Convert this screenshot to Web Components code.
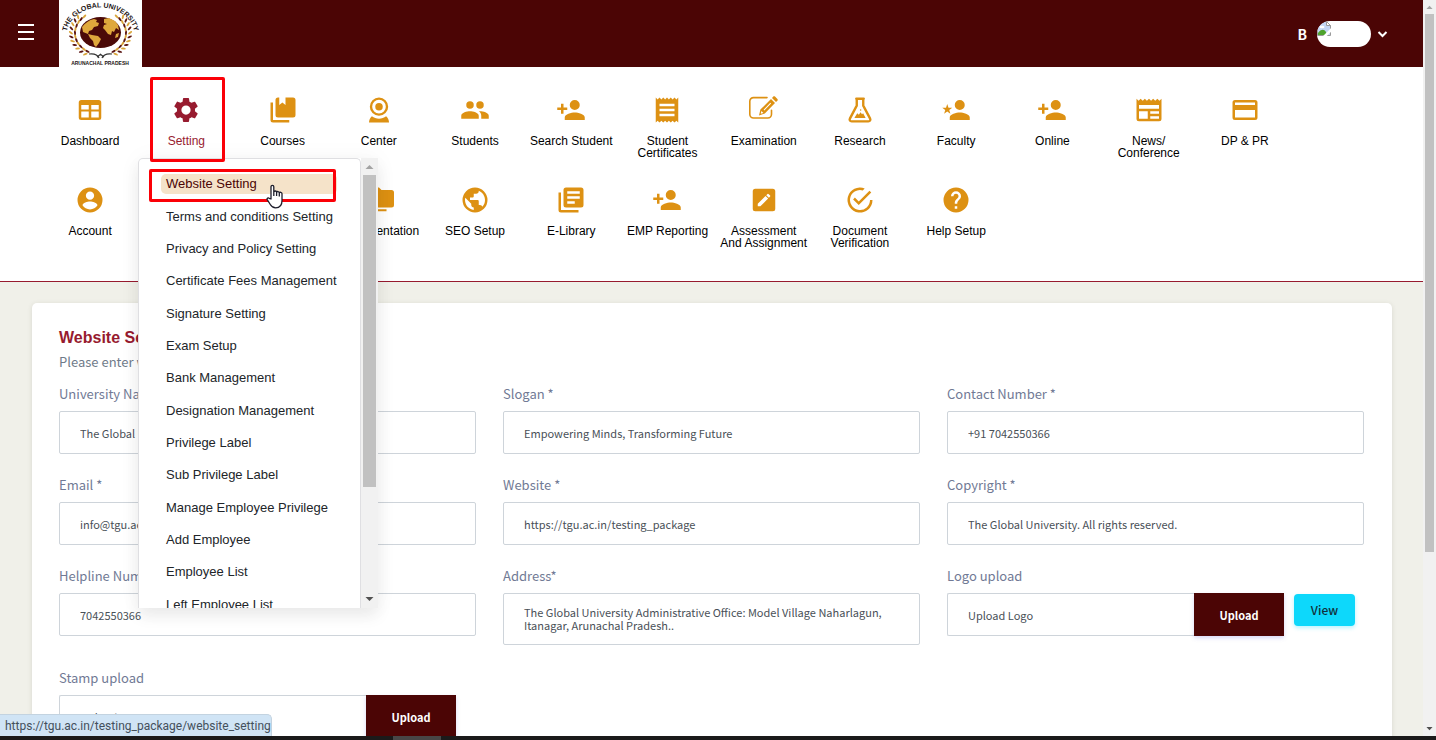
<!DOCTYPE html>
<html lang="en">
<head>
<meta charset="utf-8">
<title>Website Setting</title>
<style>
  html, body { margin: 0; height: 100%; overflow: hidden; background: #f0f0e9; }
  body { font-family: "Noto Sans CJK SC", "Open Sans", sans-serif; }
</style>
</head>
<body>
<app-shell>
  <top-bar slot="header"></top-bar>
  <main-nav slot="nav">
    <nav-item icon="dashboard">Dashboard</nav-item>
    <nav-item icon="gear" active>Setting</nav-item>
    <nav-item icon="courses">Courses</nav-item>
    <nav-item icon="webcam">Center</nav-item>
    <nav-item icon="group">Students</nav-item>
    <nav-item icon="personAdd">Search Student</nav-item>
    <nav-item icon="receipt">Student<br>Certificates</nav-item>
    <nav-item icon="exam">Examination</nav-item>
    <nav-item icon="flask">Research</nav-item>
    <nav-item icon="personStar">Faculty</nav-item>
    <nav-item icon="personAdd">Online</nav-item>
    <nav-item icon="news">News/<br>Conference</nav-item>
    <nav-item icon="card">DP &amp; PR</nav-item>
    <nav-item icon="account">Account</nav-item>
    <nav-item icon="folders" style="grid-column:4">Documentation</nav-item>
    <nav-item icon="globe">SEO Setup</nav-item>
    <nav-item icon="library">E-Library</nav-item>
    <nav-item icon="personAdd">EMP Reporting</nav-item>
    <nav-item icon="edit">Assessment<br>And Assignment</nav-item>
    <nav-item icon="check">Document<br>Verification</nav-item>
    <nav-item icon="help">Help Setup</nav-item>
    <setting-menu slot="menu"></setting-menu>
  </main-nav>
  <setting-card>
    <form-field value="The Global University">University Name *</form-field>
    <form-field value="Empowering Minds, Transforming Future">Slogan *</form-field>
    <form-field value="+91 7042550366">Contact Number *</form-field>
    <form-field value="info@tgu.ac.in">Email *</form-field>
    <form-field value="https://tgu.ac.in/testing_package">Website *</form-field>
    <form-field value="The Global University. All rights reserved.">Copyright *</form-field>
    <form-field value="7042550366">Helpline Number *</form-field>
    <form-field multiline value="The Global University Administrative Office: Model Village Naharlagun, Itanagar, Arunachal Pradesh..">Address*</form-field>
    <upload-field value="Upload Logo" view>Logo upload</upload-field>
    <upload-field value="Upload Stamp">Stamp upload</upload-field>
  </setting-card>
  <link-status slot="status">https://tgu.ac.in/testing_package/website_setting</link-status>
</app-shell>

<script>
const ICONS = {
  dashboard: '<path fill-rule="evenodd" d="M5 4h14a2 2 0 0 1 2 2v12a2 2 0 0 1-2 2H5a2 2 0 0 1-2-2V6a2 2 0 0 1 2-2zM5 8v3.500h6V8zM13 8v3.500h6V8zM5 13.200V18h6v-4.800zM13 13.200V18h6v-4.800z"/>',
  gear: '<path fill-rule="evenodd" d="M19.140 12.940c.04-.3.06-.61.06-.94 0-.32-.02-.64-.07-.94l2.030-1.580c.18-.14.23-.41.12-.61l-1.920-3.320c-.12-.22-.37-.29-.59-.22l-2.390.96c-.5-.38-1.030-.7-1.620-.94l-.36-2.540c-.04-.24-.24-.41-.48-.41h-3.840c-.24 0-.43.17-.47.41l-.36 2.540c-.59.24-1.130.57-1.620.94l-2.390-.96c-.22-.08-.47 0-.59.22L2.740 8.870c-.12.21-.08.47.12.61l2.030 1.580c-.05.3-.09.63-.09.94s.02.64.07.94l-2.030 1.580c-.18.14-.23.41-.12.61l1.920 3.320c.12.22.37.29.59.22l2.390-.96c.5.38 1.030.7 1.620.94l.36 2.540c.05.24.24.41.48.41h3.840c.24 0 .44-.17.47-.41l.36-2.540c.59-.24 1.130-.56 1.620-.94l2.390.96c.22.08.47 0 .59-.22l1.920-3.320c.12-.22.07-.47-.12-.61zM12 15.700a3.700 3.700 0 1 1 0-7.400 3.700 3.700 0 0 1 0 7.400z"/>',
  courses: '<path d="M4 6H2v14a2 2 0 0 0 2 2h13v-2H4z"/><path d="M8 2h1v6l2.500-2L14 8V2h6a2 2 0 0 1 2 2v12a2 2 0 0 1-2 2H8a2 2 0 0 1-2-2V4a2 2 0 0 1 2-2z"/>',
  webcam: '<circle cx="12" cy="9.300" r="6.400" fill="none" stroke="currentColor" stroke-width="1.900"/><circle cx="12" cy="9.300" r="3"/><path d="M4 22c0-2 .9-3.700 2.300-5 1.600 1.200 3.600 1.900 5.700 1.900s4.100-.7 5.700-1.900C19.100 18.300 20 20 20 22z"/>',
  group: '<path d="M16 11a3 3 0 1 0 0-6 3 3 0 0 0 0 6zM8 11a3 3 0 1 0 0-6 3 3 0 0 0 0 6zM8 13c-2.330 0-7 1.170-7 3.500V19h14v-2.500C15 14.170 10.330 13 8 13zM16 13c-.29 0-.62.02-.97.05 1.160.84 1.970 1.970 1.970 3.450V19h6v-2.500c0-2.330-4.670-3.500-7-3.500z"/>',
  personAdd: '<path d="M15 12a4 4 0 1 0 0-8 4 4 0 0 0 0 8zM6 10V7H4v3H1v2h3v3h2v-3h3v-2zM15 14c-2.670 0-8 1.340-8 4v2h16v-2c0-2.660-5.330-4-8-4z"/>',
  personStar: '<path d="M15 12a4 4 0 1 0 0-8 4 4 0 0 0 0 8zM15 14c-2.670 0-8 1.340-8 4v2h16v-2c0-2.660-5.330-4-8-4zM5 7.200l1 2.900 3 .1-2.400 1.800.9 3L5 13.200 2.500 15l.9-3L1 10.200l3-.1z"/>',
  receipt: '<path d="M18 17H6v-2h12zm0-4H6v-2h12zm0-4H6V7h12zM3 22l1.500-1.500L6 22l1.500-1.500L9 22l1.500-1.500L12 22l1.500-1.500L15 22l1.500-1.500L18 22l1.500-1.500L21 22V2l-1.500 1.500L18 2l-1.500 1.500L15 2l-1.500 1.500L12 2l-1.500 1.500L9 2 7.500 3.500 6 2 4.500 3.500 3 2z"/>',
  exam: '<path fill="none" stroke="currentColor" stroke-width="1.600" stroke-linecap="round" d="M18 1.600H4.500A3.700 3.700 0 0 0 .8 5.300v13A3.700 3.700 0 0 0 4.500 22h14.300a3.700 3.700 0 0 0 3.700-3.700v-4"/><path d="M10 19.500l1.400-6L22 3l4 4-10.200 10.500zM23 2l1.300-1.400c.5-.5 1.200-.5 1.700 0l2.400 2.400c.5.500.5 1.200 0 1.700L27 6z"/><path fill="#fff" d="M11.700 17.700l.7-2.700 2 1.900zM14.600 13.700l6.700-6.900.8.700-6.800 7z"/>',
  flask: '<path fill="none" stroke="currentColor" stroke-width="1.900" stroke-linejoin="round" stroke-linecap="round" d="M9 3h6M9.400 3v5.500L4 18.700C3.300 20 4 21.100 5.300 21.100h13.400c1.300 0 2-1.100 1.300-2.400L14.600 8.500V3"/><path d="M7.500 18.300l2.300-3.800 1.300 1.200 1.300-1.900 1.200 1.600.9-.9 2 3.800z"/><circle cx="12.500" cy="12" r=".6"/>',
  news: '<path fill-rule="evenodd" d="M22 3l-1.670 1.670L18.670 3 17 4.670 15.330 3l-1.660 1.670L12 3l-1.670 1.670L8.670 3 7 4.670 5.330 3 3.670 4.670 2 3v16a2 2 0 0 0 2 2h16a2 2 0 0 0 2-2zM11 19H4v-6h7zm9 0h-7v-2h7zm0-4h-7v-2h7zm0-4H4V8h16z"/>',
  card: '<path fill-rule="evenodd" d="M20 4H4a2 2 0 0 0-2 2v12a2 2 0 0 0 2 2h16a2 2 0 0 0 2-2V6a2 2 0 0 0-2-2zm0 14H4v-6h16zm0-10H4V6h16z"/>',
  account: '<path fill-rule="evenodd" d="M12 2a10 10 0 1 0 0 20 10 10 0 0 0 0-20zm0 3.200a3.300 3.300 0 1 1 0 6.600 3.300 3.300 0 0 1 0-6.600zM12 19.500c-2.500 0-4.710-1.280-6-3.220.03-1.990 4-3.080 6-3.080s5.970 1.090 6 3.080c-1.290 1.940-3.500 3.220-6 3.220z"/>',
  folders: '<path d="M3 6H1v13a2 2 0 0 0 2 2h15v-1.600H3zM22 4h-8l-2-2H7a2 2 0 0 0-2 2v12a2 2 0 0 0 2 2h15a2 2 0 0 0 2-2V6a2 2 0 0 0-2-2z"/>',
  globe: '<path fill-rule="evenodd" d="M12 2a10 10 0 1 0 0 20 10 10 0 0 0 0-20zm-1 17.930c-3.950-.49-7-3.850-7-7.930 0-.62.08-1.210.21-1.790L9 15v1c0 1.100.9 2 2 2zm6.900-2.540c-.26-.81-1-1.390-1.900-1.390h-1v-3c0-.55-.45-1-1-1H8v-2h2c.55 0 1-.45 1-1V7h2c1.100 0 2-.9 2-2v-.41c2.930 1.190 5 4.060 5 7.410 0 2.080-.8 3.970-2.100 5.390z"/>',
  library: '<path fill-rule="evenodd" d="M4 6H2v14a2 2 0 0 0 2 2h14v-2H4zM20 2H8a2 2 0 0 0-2 2v12a2 2 0 0 0 2 2h12a2 2 0 0 0 2-2V4a2 2 0 0 0-2-2zm-1 9H9V9h10zm-4 4H9v-2h6zm4-8H9V5h10z"/>',
  edit: '<path fill-rule="evenodd" d="M5 3h14a2 2 0 0 1 2 2v14a2 2 0 0 1-2 2H5a2 2 0 0 1-2-2V5a2 2 0 0 1 2-2zM7 17h2.100l6.200-6.200-2.100-2.100L7 14.900zM16.900 9.200c.2-.2.2-.6 0-.8l-1.300-1.300a.6.6 0 0 0-.8 0l-1 1 2.100 2.100z"/>',
  check: '<path d="M20 12a8 8 0 1 1-5.800-7.690l1.570-1.570A10 10 0 1 0 22 12zM7.910 10.080L6.500 11.500 11 16 21 6l-1.410-1.420L11 13.170z"/>',
  help: '<path fill-rule="evenodd" d="M12 2a10 10 0 1 0 0 20 10 10 0 0 0 0-20zm1 17h-2v-2h2zm2.070-7.750l-.9.920C13.450 12.900 13 13.500 13 15h-2v-.5c0-1.100.45-2.100 1.170-2.830l1.240-1.260c.37-.36.59-.86.59-1.410a2 2 0 0 0-4 0H8a4 4 0 0 1 8 0c0 .88-.36 1.680-.93 2.250z"/>'
};

class Base extends HTMLElement {
  connectedCallback() {
    if (this.shadowRoot) return;
    this.attachShadow({ mode: 'open' }).innerHTML =
      '<style>:host,*{box-sizing:border-box}' + this.styles() + '</style>' + this.markup();
  }
}

/* Window frame: page area, vertical scroll rail, dark edge at the bottom */
customElements.define('app-shell', class extends Base {
  styles() { return `
    :host { display: flex; flex-direction: column; height: 100vh; }
    .view { flex: 1; min-height: 0; display: flex; position: relative; }
    .page { flex: 1; min-width: 0; overflow: hidden; }
    scroll-rail { --rail: 13px; --arrow: 14px; --thumb: 76%; }
    .edge { height: 4px; flex: none; background: #1b1a1a; display: grid; grid-template-columns: 393px 48px 1fr; }
    .edge i { grid-column: 2; background: #484747; }
    ::slotted(link-status) { position: absolute; left: 0; bottom: 0; z-index: 5; }
  `; }
  markup() { return `
    <div class="view">
      <div class="page"><slot name="header"></slot><slot name="nav"></slot><slot></slot></div>
      <scroll-rail></scroll-rail>
      <slot name="status"></slot>
    </div>
    <div class="edge"><i></i></div>`; }
});

customElements.define('scroll-rail', class extends Base {
  styles() { return `
    :host { display: flex; flex-direction: column; flex: none; width: var(--rail); background: #f1f1f1; }
    svg { flex: none; width: 100%; height: var(--arrow); display: block; }
    .track { flex: 1; padding: 0 2px; }
    .thumb { height: var(--thumb); background: #c1c1c1; }
  `; }
  markup() { return `
    <svg viewBox="0 0 17 17" fill="#a3a3a3"><path d="M4.500 11l4-4 4 4z"/></svg>
    <div class="track"><div class="thumb"></div></div>
    <svg viewBox="0 0 17 17" fill="#505050"><path d="M4.500 6l4 4 4-4z"/></svg>`; }
});

customElements.define('top-bar', class extends Base {
  styles() { return `
    :host { display: flex; align-items: center; height: 67px; background: #4b0505; padding: 0 35px 0 18px; color: #fff; }
    button { border: 0; padding: 0; background: none; color: inherit; display: block; }
    .burger { width: 16px; display: grid; gap: 5px; margin-right: 25px; padding-bottom: 3px; }
    .burger i { height: 2px; background: #fff; }
    .user { margin-left: auto; display: flex; align-items: center; font: bold 14px/20px "Noto Sans CJK SC", sans-serif; }
    .avatar { width: 54px; height: 26px; border-radius: 13px; background: #fff; overflow: hidden; margin: 0 6px 0 10px; }
    svg { display: block; }
  `; }
  markup() {
    const leaves = [];
    for (const side of [-1, 1]) for (let k = 0; k < 12; k++) {
      const a = (132 - k * 10) * Math.PI / 180 + .3;
      for (const r of [25, 29]) {
        const x = 41.5 + side * r * 1.02 * Math.sin(a), y = 33 - r * .85 * Math.cos(a);
        if (y < 15) continue;
        leaves.push(`<ellipse cx="${x.toFixed(1)}" cy="${y.toFixed(1)}" rx="2.400" ry="1" fill="${(k + (r > 26)) % 2 ? '#d9a53a' : '#5a1512'}" transform="rotate(${(side * (a * 57 + (r > 26 ? 55 : 5))).toFixed(0)} ${x.toFixed(1)} ${y.toFixed(1)})"/>`);
      }
    }
    return `
    <button class="burger" aria-label="Toggle menu"><i></i><i></i><i></i></button>
    <svg width="83" height="67" viewBox="0 0 83 67" role="img" aria-label="The Global University">
      <rect width="83" height="67" fill="#fff"/>
      <path id="arc" fill="none" d="M7.500 35A34 27.500 0 0 1 75.500 35"/>
      <text font-family="Liberation Sans, sans-serif" font-weight="bold" font-size="7" fill="#1c1414"><textPath href="#arc" startOffset="50%" text-anchor="middle">THE GLOBAL UNIVERSITY</textPath></text>
      ${leaves.join('')}
      <path fill="none" stroke="#333" stroke-width="1.200" d="M30 54q8-1 10 4M53 54q-8-1-10 4M38 57l4-3M45 57l-4-3"/>
      <ellipse cx="41.500" cy="32.500" rx="20.500" ry="15.500" fill="#4b0a08"/>
      <path fill="#dfa83c" d="M23 27c3-4 7-7 12-8l3 1-1 2 3 1-1 3-4 1-2 3-3 1-1 3 4 1 6 1 3 3-2 4-3 4-2-2-1-4-3-3-2-4-5-2zM45 19l5-1 6 3 3 4 1 5-3-2-2 4-2-1-1 4-3-1-3-4-2-2 1-3 3-1-3-1zM57 34l3-1-1 4-3 1z"/>
      <text x="41" y="65" text-anchor="middle" font-family="Liberation Sans, sans-serif" font-weight="bold" font-size="5" fill="#1c1414">ARUNACHAL PRADESH</text>
    </svg>
    <button class="user" aria-label="User menu">B
      <span class="avatar"><svg width="16" height="16" viewBox="0 0 16 16"><path fill="#c4d6f5" stroke="#9a9a9a" d="M.5.5h9l4 4v10H.500z"/><path fill="#fff" stroke="#9a9a9a" d="M9.500.5v4h4z"/><ellipse cx="5" cy="6" rx="2.500" ry="1.300" fill="#fff"/><path fill="#4ea32e" d="M1 14v-2c3-4 6-4 8-1l1 3z"/><path stroke="#fff" stroke-width="2.500" d="M7 16l8-8"/></svg></span>
      <svg width="11" height="8" viewBox="0 0 11 8"><path fill="none" stroke="#fff" stroke-width="2" d="M1.500 2l4 4 4-4"/></svg>
    </button>`;
  }
});

customElements.define('main-nav', class extends Base {
  styles() { return `
    :host { display: block; position: relative; z-index: 2; height: 215px; background: #fff; border-bottom: 1px solid #971b2f; padding: 28px 130px 0 42px; }
    nav { display: grid; grid-template-columns: repeat(13, minmax(0, 1fr)); grid-auto-rows: 90px; }
    ::slotted(setting-menu) { position: absolute; left: 138px; top: 91px; }
    .mark { position: absolute; left: 150px; top: 10px; width: 75px; height: 85px; border: 3px solid #fb0007; border-radius: 2px; z-index: 3; pointer-events: none; }
  `; }
  markup() { return '<nav><slot></slot></nav><slot name="menu"></slot><div class="mark"></div>'; }
});

customElements.define('nav-item', class extends Base {
  styles() { return `
    :host { display: block; color: #000; --tint: #dd9113; }
    :host([active]) { color: #971b2f; --tint: #971b2f; }
    a { display: grid; justify-items: center; gap: 10px; color: inherit; text-decoration: none; font: 12px/12px "Liberation Sans", Arial, sans-serif; text-align: center; white-space: nowrap; }
    svg { display: block; height: 30px; color: var(--tint); fill: currentColor; }
  `; }
  markup() {
    const name = this.getAttribute('icon');
    const box = name === 'exam' ? '-1 -1 32 30' : '0 0 24 24';
    return `<a href="#"><svg width="${name === 'exam' ? 32 : 30}" viewBox="${box}">${ICONS[name]}</svg><span><slot></slot></span></a>`;
  }
});

customElements.define('setting-menu', class extends Base {
  styles() { return `
    :host { display: flex; width: 240px; height: 450px; background: #fff; border-radius: 5px 0 0 0; box-shadow: 0 8px 16px rgba(0,0,0,.07), 0 0 24px rgba(0,0,0,.04); }
    .body { flex: 1; min-width: 0; overflow: hidden; border: 1px solid #dfdfe2; border-bottom: 0; border-radius: 5px 5px 0 0; padding-top: 9px; }
    ul { list-style: none; margin: 0; padding: 0 23px 0 22px; height: 453px; display: grid; grid-template-columns: minmax(0, 1fr); grid-template-rows: repeat(14, 1fr); align-items: center; }
    a { display: block; padding: 0 5px; border-radius: 5px; color: #212529; text-decoration: none; white-space: nowrap; font: 13px/20px "Liberation Sans", Arial, sans-serif; }
    a.on { background: #f5e3c9; color: #4b0505; }
    scroll-rail { --rail: 17px; --arrow: 17px; --thumb: 75%; }
    .mark { position: absolute; left: 11px; top: 11px; width: 187px; height: 33px; border: 3px solid #fb0007; border-radius: 2px; pointer-events: none; }
    .hand { position: absolute; left: 128px; top: 26px; pointer-events: none; }
  `; }
  markup() {
    const items = ['Website Setting', 'Terms and conditions Setting', 'Privacy and Policy Setting', 'Certificate Fees Management', 'Signature Setting', 'Exam Setup', 'Bank Management', 'Designation Management', 'Privilege Label', 'Sub Privilege Label', 'Manage Employee Privilege', 'Add Employee', 'Employee List', 'Left Employee List'];
    return `
    <div class="body"><ul>${items.map((t, i) => `<li><a href="#"${i ? '' : ' class="on"'}>${t}</a></li>`).join('')}</ul></div>
    <scroll-rail></scroll-rail>
    <div class="mark"></div>
    <svg class="hand" width="18" height="25" viewBox="0 0 18 25"><path fill="#fff" stroke="#1d1d2b" stroke-width="1.300" stroke-linejoin="round" d="M5 15V2.800c0-2 2.800-2 2.800 0V8c.3-1.500 2.800-1.300 2.800.3.300-1.200 2.700-1 2.700.6.400-1 2.700-.8 2.700.9v6.700c0 4-2 7.300-6.300 7.300-3 0-4.300-1.300-5.400-3.300L1.200 15.600c-.6-1.200 1-2.300 2-1.300zM7.800 8v4M10.600 8.500V12M13.300 9v3.500"/></svg>`;
  }
});

customElements.define('setting-card', class extends Base {
  styles() { return `
    :host { display: block; margin: 21px 31px 0 32px; padding: 25px 28px 40px 27px; background: #fff; border-radius: 5px; box-shadow: 0 1px 5px rgba(60,60,40,.13); }
    h1 { margin: 0; font: bold 16px/20px "Liberation Sans", Arial, sans-serif; color: #971b2f; }
    p { margin: 4px 0 10px; font-size: 13px; line-height: 20px; color: #6f7b8a; }
    form { display: grid; grid-template-columns: repeat(3, minmax(0, 1fr)); gap: 19px 27px; align-items: start; }
  `; }
  markup() { return '<h1>Website Setting</h1><p>Please enter website details</p><form><slot></slot></form>'; }
});

const fieldStyles = `
  :host { display: block; }
  label { display: block; font-size: 13px; line-height: 24px; margin-bottom: 5px; color: #717a95; }
  input, textarea { display: block; width: 100%; margin: 0; height: 43px; border: 1px solid #ced4da; border-radius: 2px; padding: 0 20px; background: #fff; color: #495057; font: 11px/13px "Noto Sans CJK SC", sans-serif; outline: 0; }
  textarea { height: 52px; padding: 12px 20px; resize: none; overflow: hidden; margin-bottom: 2px; }
`;

customElements.define('form-field', class extends Base {
  styles() { return fieldStyles; }
  markup() {
    const v = this.getAttribute('value');
    return `<label for="f"><slot></slot></label>` +
      (this.hasAttribute('multiline') ? `<textarea id="f">${v}</textarea>` : `<input id="f" type="text" value="${v}">`);
  }
});

customElements.define('upload-field', class extends Base {
  styles() { return fieldStyles + `
    .row { display: flex; align-items: flex-start; padding-right: 20px; }
    :host([view]) .row { padding-right: 9px; }
    input { flex: 1; min-width: 0; border-right: 0; border-radius: 2px 0 0 2px; }
    button { border: 0; margin: 0; flex: none; font: bold 11px/20px "Noto Sans CJK SC", sans-serif; }
    .up { width: 90px; height: 43px; padding: 0; background: #4b0505; color: #fff; box-shadow: 0 2px 4px rgba(100,100,220,.25); }
    .view { width: 61px; height: 32px; margin: 1px 0 0 10px; padding: 0; border-radius: 4px; background: #0dd8fb; color: #12303a; font-weight: 500; font-size: 12px; box-shadow: 0 2px 4px rgba(13,216,251,.3); }
  `; }
  markup() { return `
    <label for="f"><slot></slot></label>
    <div class="row"><input id="f" type="text" value="${this.getAttribute('value')}"><button type="button" class="up">Upload</button>${this.hasAttribute('view') ? '<button type="button" class="view">View</button>' : ''}</div>`; }
});

customElements.define('link-status', class extends Base {
  styles() { return `
    :host { display: block; width: 272px; height: 22px; padding-left: 5px; background: #d0e4f5; border: 1px solid #c3d3e0; border-width: 1px 1px 0 0; border-radius: 0 5px 0 0; color: #44505c; font: 12px/22px Roboto, "Open Sans", sans-serif; white-space: nowrap; }
  `; }
  markup() { return '<slot></slot>'; }
});
</script>
</body>
</html>
